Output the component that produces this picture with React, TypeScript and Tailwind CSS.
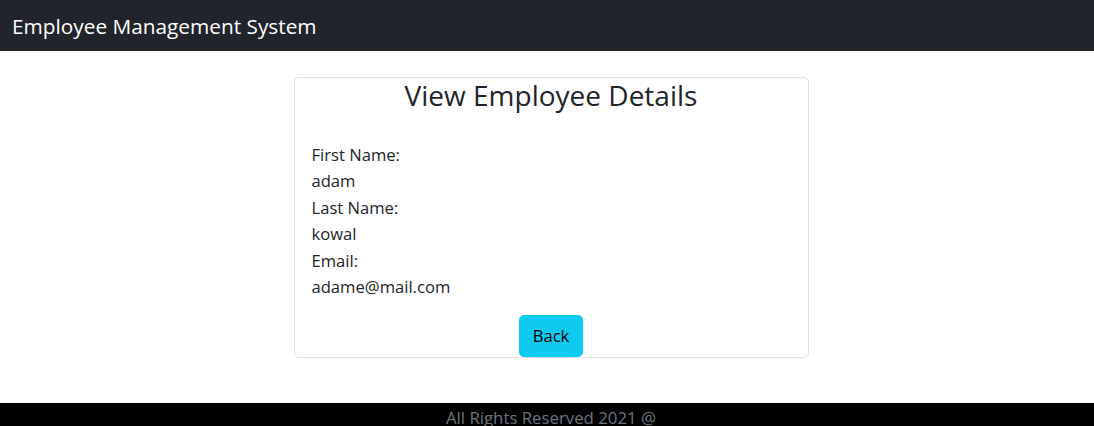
import React from 'react';

const employee = {
  firstName: 'adam',
  lastName: 'kowal',
  email: 'adame@mail.com',
};

const App: React.FC = () => {
  return (
    <div className="min-h-screen bg-white font-['Open_Sans',sans-serif] text-[#212529]">
      {/* Header */}
      <header className="flex h-[51px] items-center bg-[#212529] pl-3">
        <span className="text-[20.8px] leading-[30px] text-white">Employee Management System</span>
      </header>

      {/* Card */}
      <main className="flex justify-center pl-2 pt-[26px]">
        <div className="flex w-[515px] flex-col rounded-[5px] border border-[#dfdfdf]">
          <h3 className="text-center text-[28px] leading-[34px]">View Employee Details</h3>
          <div className="mt-[30px] px-[17px] text-[16.6px] leading-[26.4px]">
            <div>First Name:</div>
            <div>{employee.firstName}</div>
            <div>Last Name:</div>
            <div>{employee.lastName}</div>
            <div>Email:</div>
            <div>{employee.email}</div>
          </div>
          <div className="mt-[15px] flex justify-center">
            <button className="h-[42px] w-[64px] rounded-[5px] bg-[#0dcaf0] text-[16.6px] text-black">
              Back
            </button>
          </div>
        </div>
      </main>

      {/* Footer */}
      <footer className="mt-[45px] h-[30px] bg-black pl-2 text-center text-[16.8px] leading-[30px] text-[#6c757d]">
        All Rights Reserved 2021 @
      </footer>
    </div>
  );
};

export default App;
